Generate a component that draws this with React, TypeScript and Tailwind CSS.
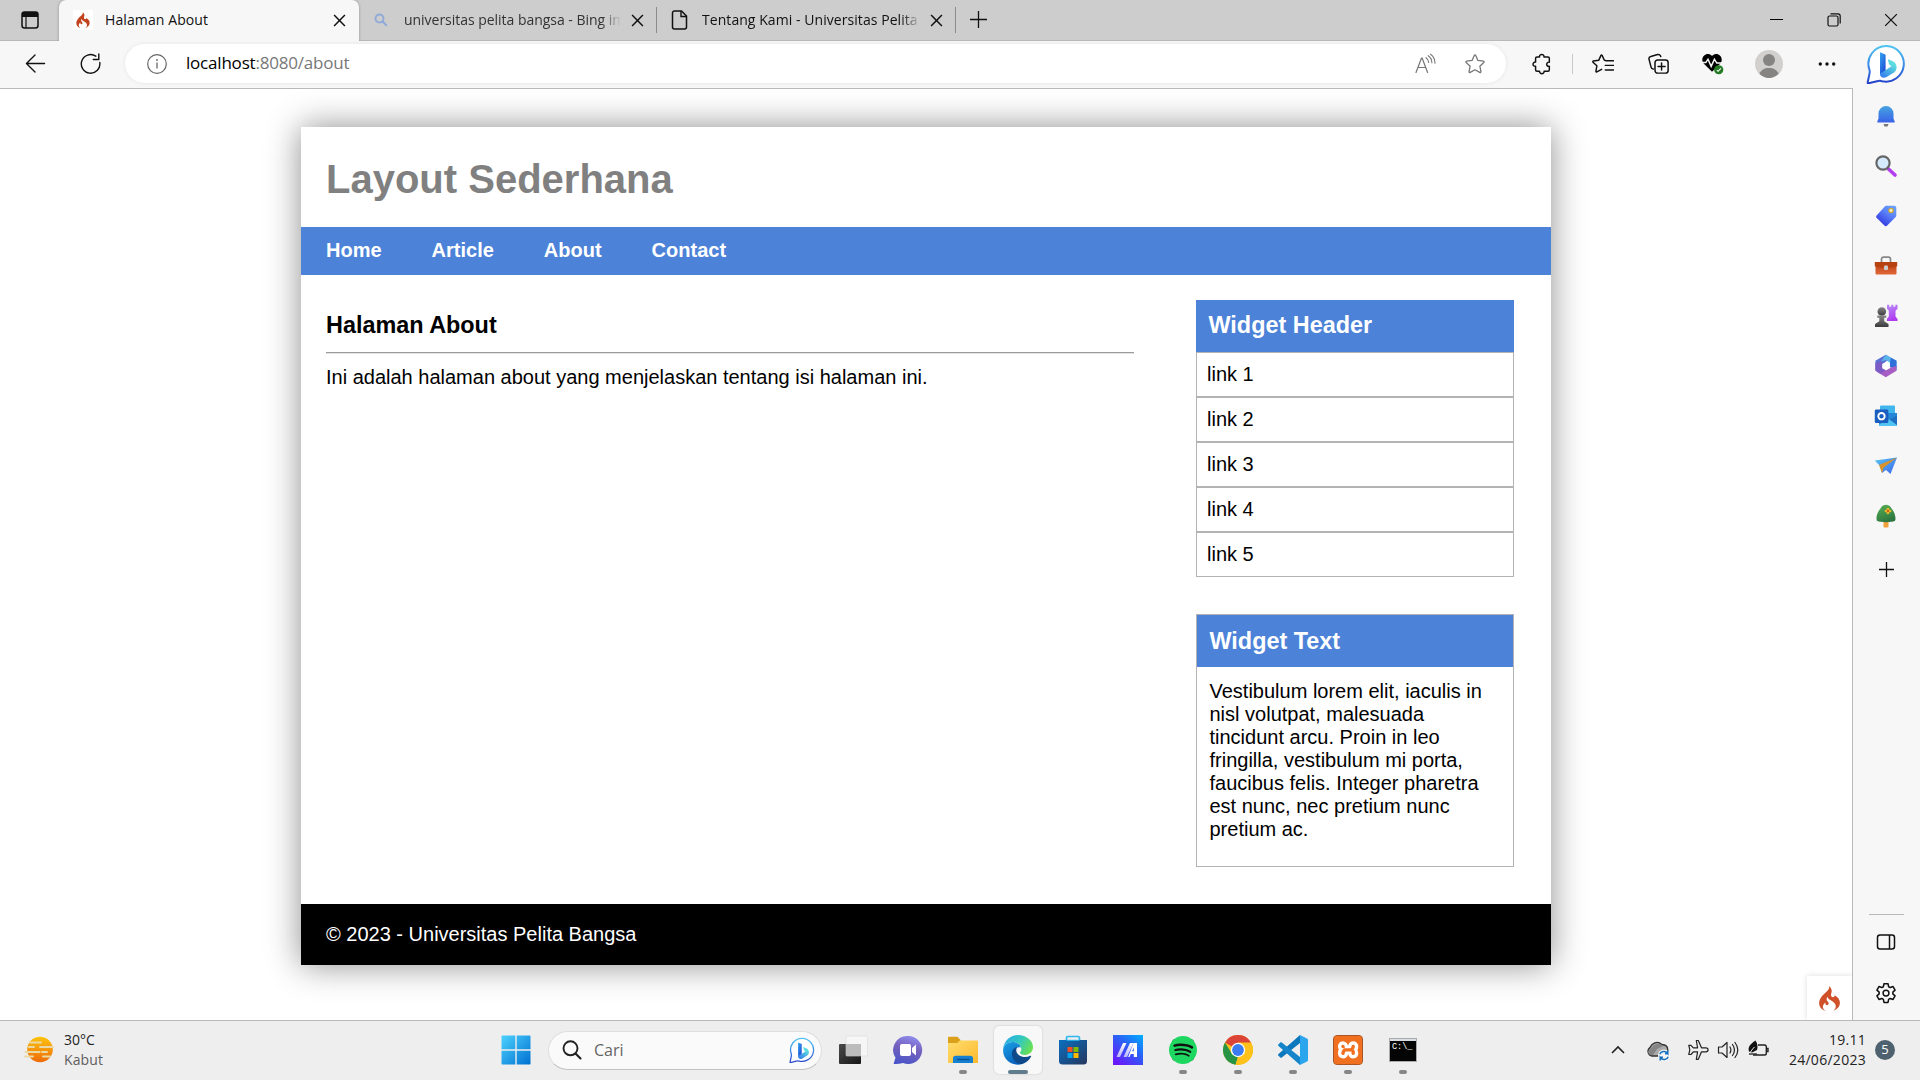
import React from "react";
import { SiCodeigniter, SiSpotify, SiXampp } from "react-icons/si";

type SvgProps = { size?: number; vb?: number; className?: string; children: React.ReactNode };

function Svg({ size = 24, vb = 24, className = "", children }: SvgProps) {
  return (
    <svg
      width={size}
      height={size}
      viewBox={`0 0 ${vb} ${vb}`}
      fill="none"
      stroke="none"
      className={`shrink-0 ${className}`}
    >
      {children}
    </svg>
  );
}

const line = { stroke: "currentColor", strokeWidth: 1.4, strokeLinecap: "round", strokeLinejoin: "round" } as const;

function Gradients() {
  return (
    <svg width="0" height="0" className="absolute">
      <defs>
        <linearGradient id="bingRing" x1="0" y1="0" x2="0" y2="1">
          <stop offset="0" stopColor="#4fc3f0" />
          <stop offset="0.5" stopColor="#3b8ee8" />
          <stop offset="1" stopColor="#2540c8" />
        </linearGradient>
        <linearGradient id="bingB" x1="0" y1="0" x2="0.6" y2="1">
          <stop offset="0" stopColor="#36a5ee" />
          <stop offset="1" stopColor="#1b50d8" />
        </linearGradient>
        <linearGradient id="bingTail" x1="0" y1="1" x2="1" y2="0">
          <stop offset="0" stopColor="#2f74ee" />
          <stop offset="1" stopColor="#5fe0dc" />
        </linearGradient>
        <linearGradient id="bell" x1="0" y1="0" x2="0" y2="1">
          <stop offset="0" stopColor="#45a4e0" />
          <stop offset="1" stopColor="#3a62e8" />
        </linearGradient>
        <linearGradient id="tag" x1="1" y1="0" x2="0.3" y2="1">
          <stop offset="0" stopColor="#6aa6fb" />
          <stop offset="0.45" stopColor="#5a82f8" />
          <stop offset="1" stopColor="#3034e0" />
        </linearGradient>
        <linearGradient id="box" x1="0" y1="0" x2="0" y2="1">
          <stop offset="0" stopColor="#b23a12" />
          <stop offset="1" stopColor="#e26a38" />
        </linearGradient>
        <linearGradient id="pawn" x1="0" y1="0" x2="0" y2="1">
          <stop offset="0" stopColor="#868686" />
          <stop offset="1" stopColor="#3c3c3c" />
        </linearGradient>
        <linearGradient id="rook" x1="0" y1="0" x2="0.3" y2="1">
          <stop offset="0" stopColor="#b98cf6" />
          <stop offset="1" stopColor="#ae3cf0" />
        </linearGradient>
        <linearGradient id="tree" x1="0.2" y1="0" x2="0.6" y2="1">
          <stop offset="0" stopColor="#55ad52" />
          <stop offset="1" stopColor="#2c7440" />
        </linearGradient>
        <linearGradient id="plane" x1="0" y1="0" x2="1" y2="1">
          <stop offset="0" stopColor="#58c8f4" />
          <stop offset="1" stopColor="#3d63ea" />
        </linearGradient>
        <linearGradient id="win" x1="0" y1="0" x2="1" y2="1">
          <stop offset="0" stopColor="#4cd2fd" />
          <stop offset="1" stopColor="#0070d2" />
        </linearGradient>
        <linearGradient id="edgeTop" x1="0" y1="0.2" x2="1" y2="0.6">
          <stop offset="0" stopColor="#2aa9e6" />
          <stop offset="0.5" stopColor="#32c8c0" />
          <stop offset="1" stopColor="#69e152" />
        </linearGradient>
        <linearGradient id="edgeLow" x1="0" y1="0" x2="0.5" y2="1">
          <stop offset="0" stopColor="#1ba2e6" />
          <stop offset="1" stopColor="#0a62bd" />
        </linearGradient>
        <linearGradient id="folder" x1="0" y1="0" x2="1" y2="1">
          <stop offset="0" stopColor="#ffdd6e" />
          <stop offset="1" stopColor="#fcb92c" />
        </linearGradient>
        <linearGradient id="chat" x1="0.7" y1="0" x2="0.4" y2="1">
          <stop offset="0" stopColor="#8f8df0" />
          <stop offset="0.45" stopColor="#7662bd" />
          <stop offset="1" stopColor="#4c55c8" />
        </linearGradient>
        <linearGradient id="store" x1="0" y1="0" x2="1" y2="1">
          <stop offset="0" stopColor="#0a6fc0" />
          <stop offset="1" stopColor="#26365e" />
        </linearGradient>
        <linearGradient id="myasus" x1="1" y1="0" x2="0.2" y2="1">
          <stop offset="0" stopColor="#00b0ff" />
          <stop offset="0.45" stopColor="#2a62f6" />
          <stop offset="1" stopColor="#6a18fa" />
        </linearGradient>
        <linearGradient id="slash" x1="0" y1="0" x2="0" y2="1">
          <stop offset="0" stopColor="#ffffff" />
          <stop offset="1" stopColor="#b9b4ff" />
        </linearGradient>
        <linearGradient id="fog" x1="0" y1="0" x2="0" y2="1">
          <stop offset="0" stopColor="#fcc40e" />
          <stop offset="1" stopColor="#ee6a08" />
        </linearGradient>
        <linearGradient id="dark" x1="0" y1="0" x2="1" y2="1">
          <stop offset="0" stopColor="#4a4a4a" />
          <stop offset="1" stopColor="#161616" />
        </linearGradient>
      </defs>
    </svg>
  );
}

function BingIcon({ size }: { size: number }) {
  return (
    <Svg size={size} vb={40}>
      <path
        d="M20.5 2a17.8 17.8 0 1 1-4.2 35.2c-2-.6-3.400-.5-5.400 0l-8.400 2.100c-.8.200-1-.3-.8-1l1.800-8.500c.4-1.800.3-3-.2-4.500A17.800 17.800 0 0 1 20.500 2Z"
        fill="#fff"
        stroke="url(#bingRing)"
        strokeWidth="2"
      />
      <path d="M14 8.300l4.800 1.900c.6.300.8.700.8 1.300v15.700L14 30.500Z" fill="url(#bingB)" />
      <path d="M21.800 15.200c4.800 1.500 8.800 3.500 8.800 7.700 0 1.400-.4 2.400-1 3.300-1-2.500-2.400-3.400-4.900-4.400-1-.5-1.500-1.200-1.900-2.200Z" fill="#5cdbe0" />
      <path d="M14 29.700c0 3.700 3.500 5 6.600 3.200l7.400-4.500c2.500-1.700 2.900-4.400 1.200-6-1-.9-2.200-1-3.300-.3L14 29.700Z" fill="url(#bingTail)" />
    </Svg>
  );
}

function CloseX({ size = 13, w = 1.4 }: { size?: number; w?: number }) {
  return (
    <Svg size={size} vb={12}>
      <path d="M1 1l10 10M11 1L1 11" stroke="#111" strokeWidth={w} />
    </Svg>
  );
}

function PlusIcon({ size }: { size: number }) {
  return (
    <svg width={size} height={size} viewBox={`0 0 ${size} ${size}`} className="shrink-0">
      <path d={`M0 ${size / 2}H${size}M${size / 2} 0V${size}`} stroke="#111" strokeWidth="1.300" />
    </svg>
  );
}

function StarPath() {
  return (
    <path
      d="M11.200 2.700c.300-.700 1.300-.700 1.600 0l2.400 5.400 5.900.700c.8.100 1.100 1 .5 1.600l-4.300 4 1.200 5.800c.1.800-.7 1.300-1.300 1l-5.200-2.900-5.200 2.900c-.6.300-1.400-.2-1.300-1l1.200-5.800-4.300-4c-.6-.6-.3-1.500.5-1.600l5.900-.7Z"
      {...line}
    />
  );
}

function TabStrip() {
  return (
    <div className="flex h-[41px] shrink-0 items-stretch border-b border-[#b9b9b9] bg-[#cdcdcd]">
      <div className="flex w-[59px] items-center justify-center">
        <Svg size={20} vb={20}>
          <rect x="2" y="2" width="16" height="16" rx="2.500" stroke="#111" strokeWidth="1.500" />
          <path d="M2 4.500A2.500 2.500 0 0 1 4.500 2h11A2.500 2.500 0 0 1 18 4.500V7H2Z" fill="#111" />
          <path d="M6 7v11" stroke="#111" strokeWidth="1.200" />
        </Svg>
      </div>
      <div className="-mb-px flex w-[300px] items-center rounded-t-[7px] bg-[#f7f7f7] pb-px pl-[14px] pr-[13px] shadow-[0_0_3px_rgba(0,0,0,0.3)] [clip-path:inset(0_-3px_0_-3px)]">
        <div className="flex h-5 w-5 items-center justify-center bg-white">
          <SiCodeigniter size={16} color="#c1441f" />
        </div>
        <span className="ml-3 flex-1 pb-px text-[14px] tracking-[0.1px] text-[#111]">Halaman About</span>
        <CloseX />
      </div>
      <div className="flex w-[298px] items-center border-r border-[#8c8c8c] pl-[15px] pr-[12px] [border-image:linear-gradient(transparent_20%,#8c8c8c_20%,#8c8c8c_80%,transparent_80%)_1]">
        <Svg size={14} vb={14}>
          <circle cx="5.500" cy="5.500" r="4" stroke="#8faad8" strokeWidth="1.900" />
          <path d="M8.500 8.500l4.300 4.300" stroke="#8faad8" strokeWidth="2.100" />
        </Svg>
        <span className="ml-4 mr-[10px] flex-1 overflow-hidden whitespace-nowrap pb-px text-[14px] tracking-[-0.03px] text-[#333] [mask-image:linear-gradient(to_right,black_91%,transparent)]">
          universitas pelita bangsa - Bing images
        </span>
        <CloseX />
      </div>
      <div className="flex w-[299px] items-center border-r border-[#8c8c8c] pl-[13px] pr-[12px] [border-image:linear-gradient(transparent_20%,#8c8c8c_20%,#8c8c8c_80%,transparent_80%)_1]">
        <Svg size={20} vb={20}>
          <path d="M4.500 1h7l5 5v11a2 2 0 0 1-2 2h-10a2 2 0 0 1-2-2V3a2 2 0 0 1 2-2Z" stroke="#111" strokeWidth="1.500" />
          <path d="M11 1v5.500h5.500" stroke="#111" strokeWidth="1.400" />
        </Svg>
        <span className="ml-[12px] mr-[9px] flex-1 overflow-hidden whitespace-nowrap pb-px text-[14px] tracking-[0.06px] text-[#111] [mask-image:linear-gradient(to_right,black_91%,transparent)]">
          Tentang Kami - Universitas Pelita Bangsa
        </span>
        <CloseX />
      </div>
      <div className="flex w-[44px] items-center justify-center pb-px">
        <PlusIcon size={17} />
      </div>
      <div className="ml-auto flex">
        <div className="flex w-[57px] items-center justify-center pb-px">
          <div className="h-px w-[13px] bg-black" />
        </div>
        <div className="flex w-[57px] items-center justify-center pb-px">
          <Svg size={14} vb={14}>
            <rect x="1" y="3" width="10" height="10" rx="1.500" stroke="#111" strokeWidth="1.200" />
            <path d="M3.500 .8H11A2.300 2.300 0 0 1 13.200 3v7.500" stroke="#111" strokeWidth="1.200" />
          </Svg>
        </div>
        <div className="flex w-[58px] items-center justify-center pb-px">
          <CloseX size={14} w={1.1} />
        </div>
      </div>
    </div>
  );
}

function Slot({ w, children }: { w: number; children: React.ReactNode }) {
  return (
    <div className="flex h-10 shrink-0 items-center justify-center text-[#111]" style={{ width: w }}>
      {children}
    </div>
  );
}

function Toolbar() {
  return (
    <div className="flex h-[47px] shrink-0 items-center bg-[#f7f7f7] pb-[2px]">
      <div className="flex w-[125px] pl-[7px]">
        <Slot w={56}>
          <Svg size={21} vb={22}>
            <path d="M1.500 11h19M10.500 2L1.500 11l9 9" {...line} />
          </Svg>
        </Slot>
        <Slot w={55}>
          <Svg size={22} vb={22}>
            <path d="M19.800 9.500A9.300 9.300 0 1 1 15.800 3.200" {...line} />
            <path d="M18.800 1v5.500h-5.500" {...line} />
          </Svg>
        </Slot>
      </div>
      <div className="flex h-[39px] w-[1381px] items-center rounded-full bg-white shadow-[0_0_4px_rgba(0,0,0,0.08)]">
        <div className="ml-[22px] text-[#666]">
          <Svg size={20} vb={20}>
            <circle cx="10" cy="10" r="9.300" stroke="currentColor" strokeWidth="1.200" />
            <path d="M10 8.500V14.500" stroke="currentColor" strokeWidth="1.300" />
            <circle cx="10" cy="6" r=".9" fill="currentColor" />
          </Svg>
        </div>
        <div className="ml-[19px] flex-1 pb-px text-[17px] tracking-[-0.2px] text-[#777]">
          <span className="text-black">localhost</span>:8080/about
        </div>
        <div className="mr-[6px] flex text-[#767676]">
          <div className="flex w-[50px] items-center justify-center">
            <Svg size={22} vb={22}>
              <path d="M2 19.500L7.500 5h.600L13.600 19.500M4 14.500h7.700" {...line} strokeWidth={1.200} />
              <path d="M12 4.700c1.700 1.100 2.600 2.600 2.700 4.700M14.200 2.700c2.400 1.600 3.600 3.900 3.700 7M16.500 1.200c2.900 2 4.400 5 4.500 9" {...line} strokeWidth={1.100} />
            </Svg>
          </div>
          <div className="flex w-[50px] items-center justify-center">
            <Svg size={22}>
              <StarPath />
            </Svg>
          </div>
        </div>
      </div>
      <div className="flex items-center pl-[7px]">
        <Slot w={57}>
          <Svg size={22} vb={24}>
            <path
              d="M9.300 4.300c-.3-3.700 5.100-3.700 4.900 0h4.300c1 0 1.500.6 1.500 1.500v4.200c-3.600-.6-4 5.200 0 4.500v3.700c0 1-.600 1.600-1.500 1.600h-4.200c.4 3.700-5.200 3.700-5 0H6.600c-1 0-1.600-.600-1.600-1.600v-3.700c-3.700.400-3.800-4.900 0-4.600V5.800c0-.9.600-1.500 1.600-1.500Z"
              {...line}
              strokeWidth={1.600}
            />
          </Svg>
        </Slot>
        <div className="ml-[2px] mr-[2px] h-5 w-px bg-[#c8c8c8]" />
        <Slot w={56}>
          <Svg size={22} vb={24}>
            <path d="M14.800 8.100l-1.300-.2L11 2.600c-.3-.5-.9-.5-1.200 0L7.300 8l-5.800.8c-.6.100-.8.800-.4 1.200l4.200 4-1 5.900c-.1.600.5 1 1 .7l5.200-2.800M15 8.500h8.500M14.500 13.500h9M14.500 18.500h9" {...line} strokeWidth={1.600} />
          </Svg>
        </Slot>
        <Slot w={54}>
          <Svg size={21} vb={24}>
            <rect x="8" y="8" width="15" height="15" rx="3" {...line} strokeWidth={1.700} />
            <path d="M15.500 11.500v8M11.500 15.500h8M6 18.300c-1.300-.2-2.200-1-2.500-2.200L1.200 7.300C.8 5.700 1.600 4.300 3.200 3.900L11 1.700c1.700-.4 3.200.5 3.600 2.300" {...line} strokeWidth={1.700} />
          </Svg>
        </Slot>
        <Slot w={55}>
          <Svg size={23} vb={24}>
            <path d="M11.500 20.500L3 12.300C-1 7.500 3 1.700 7.600 2c1.800.1 3 1 3.900 2.200C12.500 3 13.700 2.100 15.500 2c4.600-.3 8.500 5.500 4.500 10.300Z" fill="#000" />
            <path d="M0 11h5l2.300-3.500 3.300 7.500L14 7.500l2.500 4H23" stroke="#f7f7f7" strokeWidth="1.500" />
            <circle cx="18.500" cy="18.500" r="4.800" fill="#247a25" />
            <path d="M16.500 19l1.300 1.200 3-3" stroke="#fff" strokeWidth="1.100" />
          </Svg>
        </Slot>
        <Slot w={58}>
          <Svg size={28} vb={28}>
            <circle cx="14" cy="14" r="14" fill="#d2d0ce" />
            <circle cx="14" cy="10" r="6" fill="#858482" />
            <path d="M4.500 23.700C6 19.800 9.500 18 14 18s8 1.800 9.500 5.700A14 14 0 0 1 14 28a14 14 0 0 1-9.500-4.300Z" fill="#858482" />
          </Svg>
        </Slot>
        <Slot w={57}>
          <Svg size={18} vb={18}>
            <circle cx="2.300" cy="9" r="1.700" fill="#111" />
            <circle cx="9" cy="9" r="1.700" fill="#111" />
            <circle cx="15.700" cy="9" r="1.700" fill="#111" />
          </Svg>
        </Slot>
      </div>
      <div className="ml-[11px] flex">
        <BingIcon size={40} />
      </div>
    </div>
  );
}

function SideIcons() {
  const icons: React.ReactNode[] = [
    <Svg key="bell">
      <path d="M9.500 20h5l-1 2.500h-3Z" fill="#777" />
      <path d="M4 18.500c-.6 0-1-.6-.7-1.100l1.200-2.900V9.600a7.500 7.500 0 0 1 15 0v4.900l1.200 2.900c.3.500-.1 1.100-.7 1.100Z" fill="url(#bell)" />
    </Svg>,
    <Svg key="search">
      <path d="M14.500 15l6.500 6" stroke="#b13ff0" strokeWidth="3.600" strokeLinecap="round" />
      <circle cx="9" cy="9" r="6.600" fill="#d5eafc" stroke="#666" strokeWidth="2.200" />
    </Svg>,
    <Svg key="tag">
      <path d="M12.300 1.800h7.700c1.400 0 2.300.8 2.300 2.300v7.400c0 .7-.3 1.300-.8 1.800l-8.300 8.300c-.8.800-2 .8-2.800 0l-7.600-7.500c-.9-.8-.9-2 0-2.800l7.800-8.500c.5-.6 1-1 1.700-1Z" fill="url(#tag)" />
      <circle cx="17" cy="6.500" r="2.100" fill="#f5f0ce" stroke="#d5ac32" strokeWidth="1.300" />
    </Svg>,
    <Svg key="toolbox">
      <path d="M7.500 8V5.200c0-1.300.8-2 2-2h5c1.200 0 2 .7 2 2V8" stroke="#888" strokeWidth="1.700" />
      <rect x="1.500" y="8" width="21" height="12.500" rx="1.300" fill="url(#box)" />
      <path d="M.8 8h22.400v4.300c-7.500 2-15 2-22.400 0Z" fill="#b7410f" />
      <rect x="10" y="11.500" width="4" height="4.500" rx="1" fill="#ccc" />
    </Svg>,
    <Svg key="games">
      <path d="M13 .8h2.300v2h1.900v-2h2.200v2h1.900v-2h2.200v4l-2 2v5.700l2 2.600v2H12.900v-2l1.900-2.600V6.800L13 4.800Z" fill="url(#rook)" />
      <circle cx="7.800" cy="7.500" r="4.300" fill="url(#pawn)" />
      <path d="M3.300 11.500h9v2.200h-2.100v3.500l4.300 2.900v3H1v-3l4.300-2.900v-3.500h-2Z" fill="url(#pawn)" />
    </Svg>,
    <Svg key="m365">
      <path d="M11.800.8l5.500 3.100-5.500 3.500v8.400L6.400 19l-5-3V6.800Z" fill="#5a6fd4" />
      <path d="M11.800.8l10.700 6V14l-6.700-3.500v-2l-4-2.500L7 7.500Z" fill="#5ab4ea" />
      <path d="M17 3.700l5.500 3.100v9.500L16 13V8.500Z" fill="#2f6fd8" />
      <path d="M22.500 12v4.800l-10.700 6.400-9.500-5.600 9.500-1.400 4-2.400Z" fill="#a75ec4" />
      <path d="M1.400 9l6.700-1.500v4.200l3.700 4.500-5.400 3.500-5-3Z" fill="#7c5cc4" />
      <path d="M12 7.700l3.800 2.200v4.300L12 16.300l-3.800-2.100V9.900Z" fill="#fff" />
    </Svg>,
    <Svg key="outlook">
      <rect x="6" y="1.500" width="15" height="12" rx="1" fill="#40b5ee" />
      <path d="M5 9h18v11.500c0 1-.5 1.500-1.500 1.500h-15C5.500 22 5 21.500 5 20.500Z" fill="#2386d8" />
      <path d="M5 20.500L23 11v9.500c0 1-.5 1.500-1.500 1.500h-15C5.500 22 5 21.500 5 20.500Z" fill="#52c4f4" />
      <path d="M23 11v10L15 15.200Z" fill="#1f6fc0" />
      <rect x=".8" y="5.500" width="13.500" height="13.500" rx="1.300" fill="#1a5fc0" />
      <circle cx="7.500" cy="12.200" r="3.200" stroke="#fff" strokeWidth="1.900" />
    </Svg>,
    <Svg key="drop">
      <path d="M.8 6.500L23 3.600 16.500 20l-4.500-4-4 3-2-7Z" fill="url(#plane)" />
      <path d="M23 3.600L5 11l3 8 1.700-5.500Z" fill="#d8932a" />
    </Svg>,
    <Svg key="tree">
      <rect x="9.500" y="15" width="5" height="8.500" rx="1" fill="#f0a23a" />
      <path d="M12 .8c3.300.2 4.800 2 5.800 4.200 2.800 2.500 5 10.500 2.800 12-1.900 1.500-15.200 1.500-17.200 0C1.200 15.500 3.400 7.500 6.200 5 7.200 2.800 8.700 1 12 .8Z" fill="url(#tree)" />
      <path d="M14 5v4M12 7h4" stroke="#f0b82d" strokeWidth="2.700" strokeLinecap="round" />
      <circle cx="14" cy="7" r="1.200" fill="#c95c19" />
    </Svg>,
  ];
  return (
    <div className="flex w-[68px] shrink-0 flex-col items-center border-l border-[#b9b9b9] bg-[#f7f7f7] pr-[1px] pt-[3px]">
      {icons.map((icon, i) => (
        <div key={i} className="flex h-[50px] items-center justify-center">
          {icon}
        </div>
      ))}
      <div className="flex h-[56px] items-center justify-center">
        <PlusIcon size={15} />
      </div>
      <div className="mt-auto h-px w-[35px] bg-[#b9b9b9]" />
      <div className="flex h-[54px] items-center text-[#111]">
        <Svg size={20} vb={20}>
          <rect x="1.500" y="3" width="17" height="14" rx="2.500" stroke="currentColor" strokeWidth="1.500" />
          <path d="M13.500 3v14" stroke="currentColor" strokeWidth="1.500" />
        </Svg>
      </div>
      <div className="mb-[3px] flex h-[48px] items-center text-[#111]">
        <Svg size={22}>
          <path
            d="M10 1.800h4l.6 3 1.500.8 2.900-1 2 3.500-2.200 2v1.800l2.200 2-2 3.500-2.900-1-1.500.9-.6 3.100h-4l-.6-3.100-1.500-.9-2.900 1-2-3.500 2.200-2v-1.800l-2.200-2 2-3.500 2.900 1 1.500-.8Z"
            transform="translate(-1.200 -.1) scale(1.100)"
            {...line}
            strokeWidth={1.500}
          />
          <circle cx="12" cy="12.100" r="3.200" stroke="currentColor" strokeWidth="1.600" />
        </Svg>
      </div>
    </div>
  );
}

function Website() {
  return (
    <div className="relative flex flex-1 flex-col items-center overflow-hidden bg-white font-['Liberation_Sans',Arial,sans-serif] text-[20px] leading-[23px] text-black">
      <div className="mt-[38px] flex h-[838px] w-[1250px] flex-col bg-white shadow-[0_0_32px_rgba(0,0,0,0.45)]">
        <header className="flex h-[100px] shrink-0 items-center px-[25px] pt-[4px]">
          <h1 className="text-[40px] font-bold leading-[46px] text-[#808080]">Layout Sederhana</h1>
        </header>
        <nav className="flex h-[48px] shrink-0 items-center gap-[50px] bg-[#4c82d8] px-[25px] pb-px font-bold text-white">
          <a>Home</a>
          <a>Article</a>
          <a>About</a>
          <a>Contact</a>
        </nav>
        <div className="flex flex-1">
          <main className="ml-[25px] mt-[25px] w-[808px]">
            <h3 className="pt-[12px] text-[23.400px] font-bold leading-[27px]">Halaman About</h3>
            <div className="mt-[13px] h-[2px] border-b border-t border-b-[#e4e4e4] border-t-[#9a9a9a]" />
            <p className="mt-[12px]">Ini adalah halaman about yang menjelaskan tentang isi halaman ini.</p>
          </main>
          <aside className="ml-[62px] mt-[25px] w-[318px]">
            <section>
              <h3 className="h-[52px] bg-[#4c82d8] px-[12.500px] pt-[12px] text-[23.400px] font-bold leading-[27px] text-white">
                Widget Header
              </h3>
              <ul>
                {[1, 2, 3, 4, 5].map((n) => (
                  <li key={n} className="h-[45px] border border-[#b3b3b3] px-[10px] pt-[10px]">
                    link {n}
                  </li>
                ))}
              </ul>
            </section>
            <section className="mt-[37px] h-[253px] border border-[#b3b3b3]">
              <h3 className="h-[52px] bg-[#4c82d8] px-[12.500px] pt-[13px] text-[23.400px] font-bold leading-[27px] text-white">
                Widget Text
              </h3>
              <p className="px-[12.500px] pt-[13px]">
                Vestibulum lorem elit, iaculis in
                <br />
                nisl volutpat, malesuada
                <br />
                tincidunt arcu. Proin in leo
                <br />
                fringilla, vestibulum mi porta,
                <br />
                faucibus felis. Integer pharetra
                <br />
                est nunc, nec pretium nunc
                <br />
                pretium ac.
              </p>
            </section>
          </aside>
        </div>
        <footer className="flex h-[61px] shrink-0 items-center bg-black px-[25px] text-white">
          <p>© 2023 - Universitas Pelita Bangsa</p>
        </footer>
      </div>
      <div className="absolute bottom-0 right-0 flex h-[44px] w-[45px] items-center justify-center bg-white shadow-[0_0_6px_rgba(0,0,0,0.14)]">
        <SiCodeigniter size={25} color="#d0502a" />
      </div>
    </div>
  );
}

function TaskItem({ children, running, active }: { children: React.ReactNode; running?: boolean; active?: boolean }) {
  return (
    <div
      className={`relative flex h-12 w-12 shrink-0 items-center justify-center rounded-[5px] ${
        active ? "bg-[#f8f8f8] shadow-[0_0_2px_rgba(0,0,0,0.2)]" : ""
      }`}
    >
      {children}
      {running && <div className="absolute bottom-0 h-1 w-2 rounded-full bg-[#868686]" />}
      {active && <div className="absolute bottom-0 h-1 w-5 rounded-full bg-[#607d8d]" />}
    </div>
  );
}

function Taskbar() {
  return (
    <div className="flex h-[60px] shrink-0 items-center border-t border-[#b9b9b9] bg-[#eeeeee] pb-px text-[#222]">
      <div className="flex w-[492px] items-center pb-px pl-[24px]">
        <Svg size={30} vb={30}>
          <circle cx="16" cy="14.500" r="12.800" fill="url(#fog)" />
          <path d="M6 7.500h11M16 12h13M5 12h5M1.500 17h14M18 17h5M1 21.500h8M19 21.500h7" stroke="#ead9a8" strokeWidth="2" strokeLinecap="round" />
        </Svg>
        <div className="ml-[10px] flex flex-col text-[14px] leading-[20px] tracking-[0px]">
          <span>30°C</span>
          <span className="text-[#5e5e5e] tracking-[0.1px]">Kabut</span>
        </div>
      </div>
      <div className="flex items-center">
        <TaskItem>
          <Svg size={30} vb={30}>
            <path d="M1 .5h13.300v13.800H.5V1ZM15.700.5H29l.5.500v13.300H15.700ZM.5 15.700h13.800v13.800H1l-.5-.5ZM15.700 15.700h13.800V29l-.5.500H15.700Z" fill="url(#win)" />
          </Svg>
        </TaskItem>
        <div className="ml-[8px] flex h-[39px] w-[274px] items-center rounded-full border border-[#dedede] border-b-[#c2c2c2] bg-[#fafafa] pl-[13px] pr-[6px]">
          <Svg size={20} vb={20}>
            <circle cx="8.500" cy="8.300" r="7" stroke="#222" strokeWidth="1.900" />
            <path d="M13.500 13.500l5 5" stroke="#222" strokeWidth="2.100" strokeLinecap="round" />
          </Svg>
          <span className="ml-[12px] flex-1 text-[16px] text-[#666]">Cari</span>
          <BingIcon size={26} />
        </div>
        <div className="ml-[7px] flex gap-[7px]">
          <TaskItem>
            <Svg size={30} vb={30}>
              <rect x="1" y="9" width="22" height="20" rx="1" fill="url(#dark)" />
              <rect x="8" y="1" width="21.500" height="20" rx="1" fill="#f6f6f6" stroke="#dadada" strokeWidth=".6" />
              <path d="M8 9h15v12H8Z" fill="#bcbcbc" />
            </Svg>
          </TaskItem>
          <TaskItem>
            <Svg size={30} vb={30}>
              <path d="M15 1a14 14 0 1 1-5 27c-3 .9-6 1-8.800.9-.6 0-.7-.5-.4-.9l1.700-5.300A14 14 0 0 1 15 1Z" fill="url(#chat)" />
              <rect x="7" y="9" width="11" height="12" rx="2" fill="#fff" />
              <path d="M19 13l4-3.500v11L19 17Z" fill="#fff" />
            </Svg>
          </TaskItem>
          <TaskItem running>
            <Svg size={30} vb={30}>
              <path d="M0 3c0-.8.400-1.200 1.200-1.200h8.300L12.500 5v5H0Z" fill="#dba01a" />
              <path d="M0 8h9l3-2.500h17c.7 0 1 .4 1 1V27c0 .7-.3 1-1 1H1c-.7 0-1-.3-1-1Z" fill="url(#folder)" />
              <path d="M5 28v-4.500c0-1.800 1-2.800 2.800-2.800h14.400c1.800 0 2.800 1 2.800 2.800V28Z" fill="#1380d0" />
              <path d="M9 24.500h12.500" stroke="#0a4f94" strokeWidth="1.400" />
            </Svg>
          </TaskItem>
          <TaskItem active>
            <Svg size={30} vb={30}>
              <path d="M.2 14C1 5.500 7.500.1 15 .1c8.500 0 15 5.700 15 12 0 4.700-3.700 7.800-7.800 7.800-3.500 0-5.200-1.200-5.200-2.200 0-.8 1.300-1.500 1.300-3.700C18.300 10.500 14.500 7 9.500 7 5 7 1 9.500.2 14Z" fill="url(#edgeTop)" />
              <path d="M.1 15.500C.1 10 4.500 7 9.500 7c4.500 0 7.600 2.700 8.400 5.500-6-1.300-8.200 4-6.500 9 1.200 3.700 4 6.800 8 7.400C9.500 32 .1 25 .1 15.500Z" fill="url(#edgeLow)" />
              <path d="M14.500 12c-4.500.7-7.300 5.500-4.500 11.500 1.500 3.200 5 5.800 9.400 5.400 4-1.300 7-4 8.700-7.400.3-.6-.2-1-.8-.7-6.500 3.200-13.500-.3-14-4.800-.1-1.600.2-2.800 1.200-4Z" fill="#114a8b" />
            </Svg>
          </TaskItem>
          <TaskItem>
            <Svg size={30} vb={30}>
              <path d="M8.500 7V3c0-1 .5-1.500 1.500-1.500h10c1 0 1.500.5 1.500 1.500v4" stroke="#2fb7ef" strokeWidth="1.700" />
              <path d="M1 5h28v21a3.500 3.500 0 0 1-3.500 3.500h-21A3.500 3.500 0 0 1 1 26Z" fill="url(#store)" />
              <path d="M8.500 5.300h13" stroke="#2fb7ef" strokeWidth="1" />
              <path d="M9.500 12H14.500v5H9.500Z" fill="#f25022" />
              <path d="M15.500 12h5v5h-5Z" fill="#7fba00" />
              <path d="M9.500 18H14.500v5H9.500Z" fill="#00a4ef" />
              <path d="M15.500 18h5v5h-5Z" fill="#ffb900" />
            </Svg>
          </TaskItem>
          <TaskItem>
            <Svg size={30} vb={30}>
              <path d="M0 0h30v30H0Z" fill="url(#myasus)" />
              <path d="M3.500 22L10 8h3.500L7 22ZM10.500 22L17 8h3.500L14 22Z" fill="url(#slash)" />
              <path d="M20.500 8H24v14h-3.200v-3H17l1.300-2.700h2.500v-3.800L16.500 22h-1.300Z" fill="#fff" />
            </Svg>
          </TaskItem>
          <TaskItem running>
            <div className="flex h-7 w-7 items-center justify-center rounded-full bg-[linear-gradient(#111,#111)] bg-[length:22px_22px] bg-center bg-no-repeat">
              <SiSpotify size={28} color="#1ed760" />
            </div>
          </TaskItem>
          <TaskItem running>
            <Svg size={30} vb={30}>
              <circle cx="15" cy="15" r="15" fill="#fbc116" />
              <path d="M15 15L2 7.500a15 15 0 0 1 26 0Z" fill="#db4437" />
              <path d="M2 7.500L9 19l6 3-2.500 7.800A15 15 0 0 1 2 7.500Z" fill="#269345" />
              <path d="M15 22l-2.500 7.900C20 31 30 25 30 15c0-3-.8-5.500-2-7.500H15Z" fill="#fcc21b" />
              <circle cx="15" cy="15" r="7.200" fill="#fff" />
              <circle cx="15" cy="15" r="5.900" fill="#3b7df0" />
            </Svg>
          </TaskItem>
          <TaskItem running>
            <Svg size={30} vb={30}>
              <path d="M22 0l7 3.400c.7.300 1 .8 1 1.500v20.200c0 .7-.3 1.200-1 1.500L22 30Z" fill="#2aa5ee" />
              <path d="M22 0v8L3.800 22.500c-.5.400-1 .4-1.500 0L.5 20.800c-.6-.5-.6-1.200 0-1.700Z" fill="#0b77bd" />
              <path d="M22 30v-8L3.800 7.500c-.5-.4-1-.4-1.500 0L.5 9.200c-.6.500-.6 1.200 0 1.700Z" fill="#1584cb" />
            </Svg>
          </TaskItem>
          <TaskItem running>
            <div className="flex h-[30px] w-[30px] items-center justify-center rounded-[4px] border border-[#a95525] bg-[#f47b2c]">
              <div className="flex h-[24px] w-[24px] items-center justify-center bg-white">
                <SiXampp size={28} color="#f0701f" className="shrink-0" />
              </div>
            </div>
          </TaskItem>
          <TaskItem running>
            <Svg size={30} vb={30}>
              <rect x="1" y="3" width="28" height="24" fill="#aaa" />
              <rect x="2" y="6" width="26" height="20" fill="#050505" />
              <path d="M2 4h26v2H2Z" fill="#d9dde5" />
              <text x="4" y="14" fontSize="8.500" fontFamily="Liberation Mono, monospace" fill="#fff">C:\_</text>
            </Svg>
          </TaskItem>
        </div>
      </div>
      <div className="ml-auto flex items-center">
        <Svg size={14} vb={14} className="mr-[21px]">
          <path d="M1 10L7 4l6 6" stroke="#222" strokeWidth="1.600" />
        </Svg>
        <Svg size={24} className="mr-[17px] mt-[2px]">
          <path d="M5.500 17A4.800 4.800 0 0 1 4 8.500C5.500 4.500 11 1 16 5.500c3.500.200 5.800 2.500 5.800 5.500 0 3.500-2.500 6-5.800 6Z" fill="#aaa" stroke="#333" strokeWidth="1.300" />
          <path d="M3 11l4-4c4-4 8-2 10 0l-6 3-4 6H4c-2-1.500-2.500-3-1-5Z" fill="#858585" />
          <circle cx="18" cy="16.500" r="6" fill="#f6f6f6" />
          <path d="M13.800 15.300c1-3 5.500-4 8-.8V11.500M22.200 17.700c-1 3-5.500 4-8 .8V21.500M22 14.700h-3M14 18.300h3" stroke="#1670c0" strokeWidth="1.500" />
        </Svg>
        <Svg size={22} vb={22} className="mr-[8px]">
          <path d="M9.300 1.500h2l3.200 7.300h4.300c3 0 3 4 0 4h-4.300l-3.200 7.500h-2l1.300-7.500H6.300L4 15.500H1.800l1-4.600-1-4.500H4l2.300 2.400h4.300Z" {...line} strokeWidth={1.200} />
        </Svg>
        <Svg size={22} vb={22} className="mr-[8px]">
          <path d="M1.500 8H5l5-4.500v15L5 14H1.500Z" {...line} strokeWidth={1.200} />
          <path d="M13 8c1.200 2 1.200 4 0 6M15.500 5.500c2.500 3.500 2.500 7.500 0 11M18 3.500c3.600 4.800 3.600 10.200 0 15" {...line} strokeWidth={1.200} />
        </Svg>
        <Svg size={22} vb={22} className="mr-[12px]">
          <path d="M11 6h6.500c1 0 1.800.8 1.800 1.800v6.400c0 1-.8 1.800-1.800 1.800H6M19.500 9.500h1.500v3h-1.500" stroke="#222" strokeWidth="1.400" />
          <path d="M8.500 1.500C3 5 .5 8.500 2 12.500l3 1 5-2.500c1-3 .5-6.500-1.500-9.500Z" fill="#111" />
          <path d="M2 17c1-4 3-6.500 5.500-9" stroke="#eee" strokeWidth="1" />
          <path d="M2 15h8" stroke="#222" strokeWidth="1.300" />
        </Svg>
        <div className="flex w-[85px] flex-col items-end whitespace-nowrap pb-px text-[14px] leading-[20px] tracking-[0.28px]">
          <span>19.11</span>
          <span>24/06/2023</span>
        </div>
        <div className="ml-[9px] mr-[25px] flex h-5 w-5 items-center justify-center rounded-full bg-[#4e616e] text-[13px] text-white">
          5
        </div>
      </div>
    </div>
  );
}

export default function App() {
  return (
    <div className="flex h-[1080px] w-[1920px] flex-col overflow-hidden bg-[#f7f7f7] font-['Open_Sans','Noto_Sans',sans-serif]">
      <Gradients />
      <TabStrip />
      <Toolbar />
      <div className="flex min-h-0 flex-1">
        <div className="flex flex-1 border-t border-[#b9b9b9]">
          <Website />
        </div>
        <SideIcons />
      </div>
      <Taskbar />
    </div>
  );
}
